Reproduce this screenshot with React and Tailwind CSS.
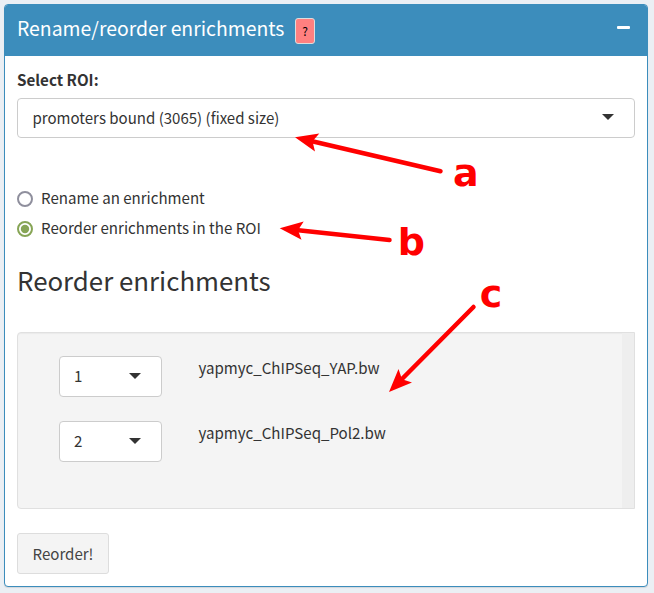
const Caret = () => (
  <svg width="12" height="6" viewBox="0 0 12 6" className="mb-[2px] shrink-0">
    <path d="M0 0H12L6 6Z" fill="#333" />
  </svg>
);

const Radio = ({ label, checked }) => (
  <label className="flex h-[30px] items-center gap-2">
    <svg width="16" height="16" viewBox="0 0 16 16" className="shrink-0">
      <circle cx="8" cy="8" r="7" fill="#fff" stroke={checked ? "#87a556" : "#8f8f9d"} strokeWidth="2" />
      {checked && <circle cx="8" cy="8" r="4.2" fill="#87a556" />}
    </svg>
    <span className="mb-[2px] whitespace-nowrap">{label}</span>
  </label>
);

const OrderRow = ({ n, name }) => (
  <div className="flex h-[41px]">
    <div className="flex w-[103px] items-center justify-between rounded border border-[#ccc] bg-white pl-[14px] pr-5">
      <span>{n}</span>
      <Caret />
    </div>
    <div className="ml-[36.5px] h-6 leading-6">{name}</div>
  </div>
);

const Annotations = () => (
  <svg
    className="absolute left-0 top-0"
    width="654"
    height="593"
    viewBox="0 0 654 593"
    fill="#f00"
    stroke="none"
  >
    <g stroke="#f00" strokeWidth="4.5" strokeLinecap="round">
      <path d="M310 140.7L440.5 171.3" />
      <path d="M296 230L389.5 240" />
      <path d="M400 381L473.5 307" />
    </g>
    <path d="M295 137.2L319.3 133.5L312.5 141.2L315 151.5Z" />
    <path d="M279.7 228.3L303.7 221.5L298 230.2L301.5 239.8Z" />
    <path d="M389 392L398.5 369L402 379.2L412 382.5Z" />
    <g className="font-['DejaVu_Sans'] text-[38px] font-bold">
      <text x="453" y="186">a</text>
      <text x="397.8" y="255">b</text>
      <text x="479.8" y="307">c</text>
    </g>
  </svg>
);

export default function App() {
  return (
    <div className="relative h-[593px] w-[654px] overflow-hidden bg-[#ebeff4] p-1 font-['Noto_Sans_CJK_SC',sans-serif] text-[15.08px] text-[#333]">
      <div className="h-[583px] w-[644px] overflow-hidden rounded-[4px] border border-[#3c8dbc] bg-white shadow-[0_1px_1px_rgba(0,0,0,0.1)]">
        <div className="flex h-[51px] items-center bg-[#3c8dbc] pl-3 pr-[17.5px] text-white">
          <h3 className="-mt-[5px] w-[267px] whitespace-nowrap text-[19.4px] leading-6">Rename/reorder enrichments</h3>
          <span className="ml-[11px] mt-[1px] flex h-[26px] w-5 items-center justify-center rounded-[3px] border border-[#ddd] bg-[#ff8080] text-[12px] text-black">
            ?
          </span>
          <span className="mb-[6px] ml-auto h-[3px] w-[13px] rounded-[1px] bg-white" />
        </div>
        <div className="px-3">
          <div className="mt-[11px] h-6 text-[15.2px] font-bold leading-6">Select ROI:</div>
          <div className="mt-[7px] flex h-10 items-center justify-between rounded-[4px] border border-[#ccc] pl-[14.5px] pr-5">
            <span className="text-[15.04px]">promoters bound (3065) (fixed size)</span>
            <Caret />
          </div>
          <div className="mt-[46px]">
            <Radio label="Rename an enrichment" />
            <Radio label="Reorder enrichments in the ROI" checked />
          </div>
          <h2 className="mt-[18px] h-9 text-[25.85px] leading-9">Reorder enrichments</h2>
          <div className="mt-[34px] flex h-[177px] justify-between rounded-l-[4px] border border-[#e0e0e0] bg-[#f4f4f4] shadow-[inset_0_1px_1px_rgba(0,0,0,0.04)]">
            <div className="flex flex-col gap-6 pl-[41px] pt-[23px]">
              <OrderRow n="1" name="yapmyc_ChIPSeq_YAP.bw" />
              <OrderRow n="2" name="yapmyc_ChIPSeq_Pol2.bw" />
            </div>
            <div className="w-3 bg-[#eee]" />
          </div>
          <button className="mt-6 flex h-[41px] w-[92px] items-center justify-center rounded-[3px] border border-[#ddd] bg-[#f4f4f4] pt-[2px] text-[#444]">
            Reorder!
          </button>
        </div>
      </div>
      <Annotations />
    </div>
  );
}
